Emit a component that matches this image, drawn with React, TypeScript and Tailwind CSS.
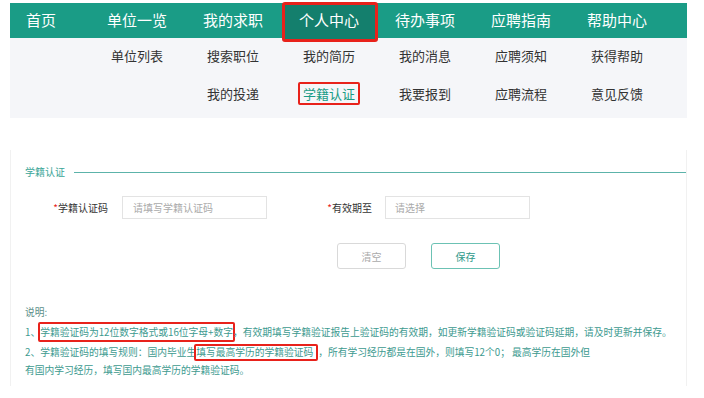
import React from "react";

const font = { fontFamily: '"Noto Sans CJK SC", "Noto Sans", sans-serif' };

const navItems = ["单位一览", "我的求职", "个人中心", "待办事项", "应聘指南", "帮助中心"];
const row1 = ["单位列表", "搜索职位", "我的简历", "我的消息", "应聘须知", "获得帮助"];
const row2 = ["", "我的投递", "学籍认证", "我要报到", "应聘流程", "意见反馈"];

export default function App() {
  return (
    <div className="w-[704px] h-[398px] bg-white overflow-hidden pt-[3px]" style={font}>
      <div className="ml-[10px] w-[677px]">
        {/* top nav */}
        <div className="h-[35px] bg-[#1a9c86] flex items-center text-white text-[15px]">
          <div className="w-[62px] text-center">首页</div>
          <div className="w-[17px]" />
          {navItems.map((n) => (
            <div key={n} className="relative w-[96px] h-full flex items-center justify-center">
              {n === "个人中心" && (
                <div className="absolute left-[1px] right-[-1px] top-[-1px] bottom-[-4px] bg-[#147f6d] border-[3px] border-[#e8221b] rounded-[3px]" />
              )}
              <span className="relative">{n}</span>
            </div>
          ))}
        </div>
        {/* submenu */}
        <div className="h-[80px] bg-[#f5f6f9] pt-[9px] flex flex-col gap-[21px] text-[13px] text-[#333]">
          {[row1, row2].map((row, ri) => (
            <div key={ri} className="h-[17px] flex items-center">
              <div className="w-[79px]" />
              {row.map((s, i) => (
                <div key={i} className="w-[96px] flex items-center justify-center">
                  {s === "学籍认证" ? (
                    <span className="border-2 border-[#e8221b] rounded-[2px] px-[3px] leading-[19px] text-[#1a9c86]">{s}</span>
                  ) : (
                    s
                  )}
                </div>
              ))}
            </div>
          ))}
        </div>
      </div>

      {/* section */}
      <div className="ml-[10px] w-[677px] mt-[32px] h-[236px] border-l border-r border-[#f1f1f1] pt-[15px]">
        <div className="h-[14px] flex items-center pl-[14px]">
          <span className="text-[10px] text-[#3aa597] leading-[14px]">学籍认证</span>
          <div className="ml-[9px] flex-1 h-px bg-[#5cb3aa]" />
        </div>

        <div className="mt-[17px] flex items-center text-[10px]">
          <div className="w-[97px] text-right text-[#333]">
            <span className="text-[#e8221b]">*</span>学籍认证码
          </div>
          <div className="ml-[14px] w-[145px] h-[23px] border border-[#e3e3e3] flex items-center pl-[10px] text-[#aaa]">
            请填写学籍认证码
          </div>
          <div className="w-[105px] text-right text-[#333]">
            <span className="text-[#e8221b]">*</span>有效期至
          </div>
          <div className="ml-[13px] w-[145px] h-[23px] border border-[#e3e3e3] flex items-center pl-[9px] text-[#aaa]">
            请选择
          </div>
        </div>

        <div className="mt-[24px] flex pl-[326px] gap-[25px] text-[10px]">
          <div className="w-[69px] h-[26px] border border-[#d9d9d9] rounded-[3px] flex items-center justify-center text-[#aaa]">
            清空
          </div>
          <div className="w-[69px] h-[26px] border border-[#6cc2b4] rounded-[3px] flex items-center justify-center text-[#2e9a8b]">
            保存
          </div>
        </div>

        <div className="mt-[36px] pl-[14px] text-[9.75px] text-[#3d9a8f]">
          <div className="leading-[14px] text-[#5c8f89]">说明:</div>
          <div className="mt-[3px] h-[20px] flex items-center whitespace-nowrap">
            1、
            <span className="border-2 border-[#e8221b] rounded-[2px] ml-[-2px] mr-[-2px] h-[20px] flex items-center">
              学籍验证码为12位数字格式或16位字母+数字
            </span>
            ，有效期填写学籍验证报告上验证码的有效期，如更新学籍验证码或验证码延期，请及时更新并保存。
          </div>
          <div className="mt-[2px] h-[17px] flex items-center whitespace-nowrap">
            2、学籍验证码的填写规则：国内毕业生
            <span className="border-2 border-[#e8221b] rounded-[2px] ml-[-2px] h-[17px] flex items-center pr-[3px]">
              填写最高学历的学籍验证码
            </span>
            ，所有学习经历都是在国外，则填写12个0； 最高学历在国外但
          </div>
          <div className="leading-[14px] mt-[2px]">有国内学习经历，填写国内最高学历的学籍验证码。</div>
        </div>
      </div>
    </div>
  );
}
